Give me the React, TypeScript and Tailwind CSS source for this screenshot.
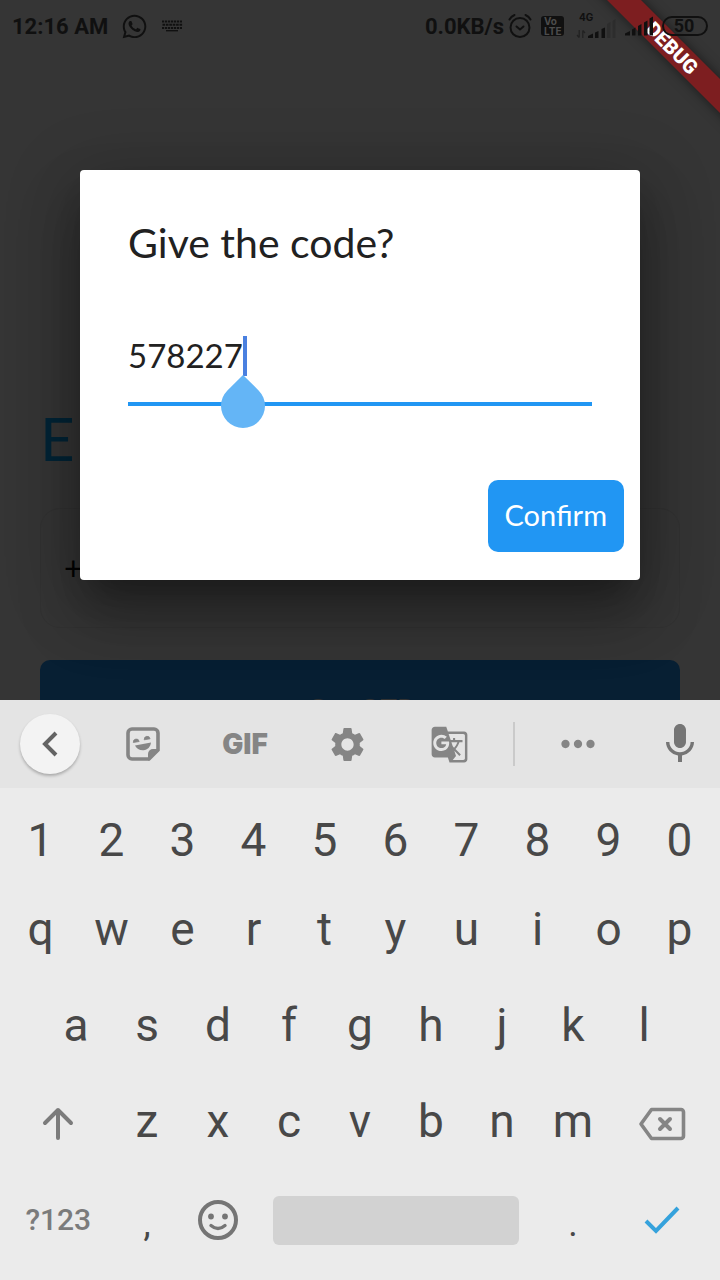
import { useState } from "react";
import type { ReactNode } from "react";
import { FaWhatsapp } from "react-icons/fa";
import { MdGTranslate, MdMic, MdMoreHoriz, MdSettings } from "react-icons/md";

const DIGITS = ["1", "2", "3", "4", "5", "6", "7", "8", "9", "0"];
const TOP_ROW = ["q", "w", "e", "r", "t", "y", "u", "i", "o", "p"];
const HOME_ROW = ["a", "s", "d", "f", "g", "h", "j", "k", "l"];
const BOTTOM_ROW = ["z", "x", "c", "v", "b", "n", "m"];

function AlarmIcon() {
  return (
    <svg width="24" height="26" viewBox="0 0 24 26" fill="none" stroke="currentColor" strokeWidth="2" strokeLinecap="round">
      <circle cx="12" cy="14.5" r="9.5" />
      <path d="M8.5 13.5l3.5 3 3.5-3" />
      <path d="M1.5 6.5Q3 3.5 6.5 2M22.5 6.5Q21 3.5 17.5 2" />
    </svg>
  );
}

function KeyboardIcon() {
  return (
    <svg width="22" height="12" viewBox="0 0 22 12" stroke="currentColor" fill="none">
      <path d="M1 1.5h20" strokeWidth="2" strokeDasharray="2.2 0.8" />
      <path d="M1.5 4.7h20" strokeWidth="2" strokeDasharray="2.6 0.8" />
      <path d="M1 7.9h20" strokeWidth="2" strokeDasharray="2.2 0.8" />
      <path d="M5 10.7h12" strokeWidth="1.4" />
    </svg>
  );
}

function DataSignal() {
  return (
    <svg width="40" height="26" viewBox="0 0 40 26" fill="currentColor">
      <path d="M3.2 17v7.5M3.2 24.5L1 22M6.8 25v-7.5M6.8 17.5L9 20" stroke="currentColor" strokeWidth="1.2" fill="none" opacity=".55" />
      <path d="M12 25v-2l5-2.500v4.500zM19 19.500l3.500-1.500v7H19zM25.500 16l3.500-1.500V25h-3.500z" />
      <path d="M31 11l3.5-2v16H31zM36.500 8l3-2v19h-3z" opacity=".22" />
    </svg>
  );
}

function Signal() {
  return (
    <svg width="28" height="20" viewBox="0 0 28 20" fill="currentColor">
      <path d="M0 19.500v-2l5-2.500v4.500zM7 13.500l3.500-2v8H7zM13 10l3.500-2v11.500H13zM19 6.500l3.500-2v15H19zM24.500 2.500l3.500-2v19h-3.500z" />
    </svg>
  );
}

function StatusBar() {
  return (
    <header className="relative z-10 flex h-[50px] items-center justify-between px-3 pt-[2px] text-[#101010]">
      <div className="flex items-center gap-[13px]">
        <span className="font-['Roboto',sans-serif] text-[22px] font-bold">12:16 AM</span>
        <FaWhatsapp size={27} />
        <KeyboardIcon />
      </div>
      <div className="flex items-center gap-[9px]">
        <div className="flex items-center gap-1">
          <span className="font-['Roboto',sans-serif] text-[22px] font-bold">0.0KB/s</span>
          <AlarmIcon />
        </div>
        <span className="flex h-5 w-[23px] flex-col rounded-[3px] bg-[#101010] px-[3px] font-['Inter',sans-serif] text-[10px] leading-[10px] font-bold text-[#4c4c4c]">
          <span>Vo</span>
          <span>LTE</span>
        </span>
        <div className="relative ml-[3px] flex">
          <DataSignal />
          <span className="absolute -top-px left-[3px] font-['Inter',sans-serif] text-[10px] leading-none font-bold">4G</span>
        </div>
        <Signal />
        <span className="flex h-5 w-[46px] items-center justify-center rounded-full border-2 border-[#101010] pr-[2px] font-['Roboto',sans-serif] text-lg leading-none font-bold">
          50
        </span>
      </div>
    </header>
  );
}

function LoginPage() {
  return (
    <div className="absolute inset-0 overflow-hidden px-10 pt-[402px] font-['Lato',sans-serif]" aria-hidden="true">
      <p className="text-[60px] leading-[72px] text-[#002436]">E</p>
      <div className="mt-[34px] flex h-[120px] items-center rounded-[20px] border border-[#323232] px-[23px] text-[32px] text-black">
        +
      </div>
      <div className="mt-8 flex h-[98px] items-center justify-center rounded-[10px] bg-[#071f33] text-[28px] text-[#333333]">
        Get OTP
      </div>
    </div>
  );
}

function DebugRibbon() {
  return (
    <div className="absolute top-9 -right-[52px] flex h-6 w-[200px] rotate-45 items-center justify-center bg-[#7d1e20] font-['Roboto',sans-serif] text-xl leading-none font-black text-white shadow-[0_0_12px_rgba(0,0,0,0.5)]">
      DEBUG
    </div>
  );
}

function CodeDialog() {
  const [code, setCode] = useState("578227");
  return (
    <form
      role="dialog"
      aria-labelledby="code-title"
      onSubmit={(e) => e.preventDefault()}
      className="flex w-full flex-col rounded bg-white px-12 pt-12 pb-7 font-['Lato',sans-serif] text-[#212121] shadow-[0_22px_30px_-14px_rgba(0,0,0,0.25),0_36px_60px_4px_rgba(0,0,0,0.22),0_14px_70px_8px_rgba(0,0,0,0.2)]"
    >
      <label id="code-title" htmlFor="code" className="text-[41px] leading-[50px]">
        Give the code?
      </label>
      <div className="relative mt-16 border-b-4 border-[#2196f3] pb-[22px]">
        <input
          id="code"
          inputMode="numeric"
          value={code}
          onChange={(e) => setCode(e.target.value)}
          className="block h-12 w-full pb-[2px] text-[33px] leading-none caret-transparent outline-none"
        />
        <span className="absolute top-1 left-[115px] h-10 w-1 bg-[#4a80e0]" />
        <svg className="absolute top-[43px] left-[93px]" width="44" height="53" viewBox="0 0 44 53" fill="#64b5f6">
          <path d="M22 0L37.600 15.400A22 22 0 1 1 6.400 15.400Z" />
        </svg>
      </div>
      <button
        type="submit"
        className="mt-[74px] -mr-8 h-[72px] self-end rounded-[10px] bg-[#2196f3] px-[17px] pb-1 text-[29px] leading-none text-white"
      >
        Confirm
      </button>
    </form>
  );
}

function Key({ label, className, children }: { label: string; className: string; children?: ReactNode }) {
  return (
    <button type="button" aria-label={label} className={`flex min-w-0 items-center justify-center ${className}`}>
      {children ?? label}
    </button>
  );
}

function Letters({ keys }: { keys: string[] }) {
  return (
    <>
      {keys.map((k) => (
        <Key key={k} label={k} className="flex-[2]" />
      ))}
    </>
  );
}

function Toolbar() {
  return (
    <div className="grid h-[88px] grid-cols-[92fr_102fr_102fr_102fr_103fr_25fr_103fr_91fr] bg-[#e4e4e4] text-[#858585]">
      <Key label="Back" className="justify-start! pl-5">
        <span className="flex size-15 shrink-0 items-center justify-center rounded-full bg-[#f3f3f3] text-[#636363] shadow-[0_2px_3px_rgba(0,0,0,0.25)]">
          <svg width="24" height="28" viewBox="0 0 24 28" fill="none" stroke="currentColor" strokeWidth="4">
            <path d="M18 3L7 14l11 11" />
          </svg>
        </span>
      </Key>
      <Key label="Stickers" className="">
        <svg width="34" height="34" viewBox="0 0 34 34" fill="none">
          <path d="M6 2h22a4 4 0 0 1 4 4v17l-9 9H6a4 4 0 0 1-4-4V6a4 4 0 0 1 4-4z" stroke="currentColor" strokeWidth="3.600" />
          <path d="M33 22L23 33.500h-1V27a5 5 0 0 1 5-5z" fill="currentColor" />
          <path d="M9 18.500L25 15.500C24.500 20 21.500 23 17.500 23.200 13.500 23.400 10.500 21.500 9 18.500z" fill="currentColor" />
          <path d="M7.300 15.500a3 3.300 0 0 1 5.900-1zM18.200 12.800a3 3.300 0 0 1 5.900-1z" fill="currentColor" stroke="currentColor" strokeWidth=".8" />
        </svg>
      </Key>
      <Key label="GIF" className="font-['Inter',sans-serif] text-[28px] leading-none font-black" />
      <Key label="Settings" className="">
        <MdSettings size={41} />
      </Key>
      <Key label="Translate" className="">
        <MdGTranslate size={39} />
      </Key>
      <span className="h-11 w-[2px] place-self-center bg-[#cacaca]" />
      <Key label="More" className="">
        <MdMoreHoriz size={50} />
      </Key>
      <Key label="Voice input" className="justify-end! pr-4 text-[#757575]">
        <MdMic size={48} />
      </Key>
    </div>
  );
}

function Keyboard() {
  return (
    <section aria-label="Keyboard" className="bg-[#ebebeb] font-['Roboto',sans-serif] text-[#484848]">
      <Toolbar />
      <div className="px-[5px] pt-2 pb-3 text-[46px] leading-none">
        <div className="flex h-[88px]">
          <Letters keys={DIGITS} />
        </div>
        <div className="flex h-24 pb-[6px]">
          <Letters keys={TOP_ROW} />
        </div>
        <div className="flex h-24 px-[5%] pb-[6px]">
          <Letters keys={HOME_ROW} />
        </div>
        <div className="flex h-24">
          <Key label="Shift" className="flex-[3] text-[#7b7b7b]">
            <svg width="32" height="34" viewBox="0 0 32 34" fill="none" stroke="currentColor" strokeWidth="4" strokeLinecap="round" strokeLinejoin="round">
              <path d="M16 31V3M3 16L16 3l13 13" />
            </svg>
          </Key>
          <div className="flex flex-[14] pb-[6px]">
            <Letters keys={BOTTOM_ROW} />
          </div>
          <Key label="Delete" className="flex-[3] text-[#858585]">
            <svg width="48" height="34" viewBox="0 0 48 34" fill="none" stroke="currentColor" strokeWidth="3.600" strokeLinejoin="round">
              <path d="M13.500 2.500H43a2.500 2.500 0 0 1 2.500 2.500v24a2.500 2.500 0 0 1-2.500 2.500H13.500L3 17z" />
              <path d="M22 12l10 10M32 12L22 22" strokeWidth="4" strokeLinecap="round" />
            </svg>
          </Key>
        </div>
        <div className="flex h-24">
          <Key label="?123" className="flex-[3] text-[30px] font-medium text-[#7b7b7b]" />
          <Key label="," className="flex-[2] pt-2 text-4xl" />
          <Key label="Emoji" className="flex-[2] text-[#757575]">
            <svg width="40" height="40" viewBox="0 0 40 40" fill="none" stroke="currentColor" strokeWidth="4">
              <circle cx="20" cy="20" r="18" />
              <circle cx="13" cy="16.500" r="2.900" fill="currentColor" stroke="none" />
              <circle cx="27" cy="16.500" r="2.900" fill="currentColor" stroke="none" />
              <path d="M13 25.500q7 6 14 0" strokeWidth="3.400" strokeLinecap="round" />
            </svg>
          </Key>
          <Key label="Space" className="flex-[8]">
            <span className="mx-[19px] h-[49px] flex-1 rounded-md bg-[#d2d2d2]" />
          </Key>
          <Key label="." className="flex-[2] pt-2 text-4xl" />
          <Key label="Done" className="flex-[3] text-[#35a2dc]">
            <svg width="38" height="30" viewBox="0 0 38 30" fill="none" stroke="currentColor" strokeWidth="4">
              <path d="M3 16l10 10L35 3" />
            </svg>
          </Key>
        </div>
      </div>
    </section>
  );
}

export default function App() {
  return (
    <div className="flex min-h-screen flex-col bg-[#353535]">
      <main className="relative flex flex-1 flex-col overflow-hidden">
        <LoginPage />
        <DebugRibbon />
        <StatusBar />
        <div className="relative flex flex-1 items-center px-20">
          <CodeDialog />
        </div>
      </main>
      <Keyboard />
    </div>
  );
}
